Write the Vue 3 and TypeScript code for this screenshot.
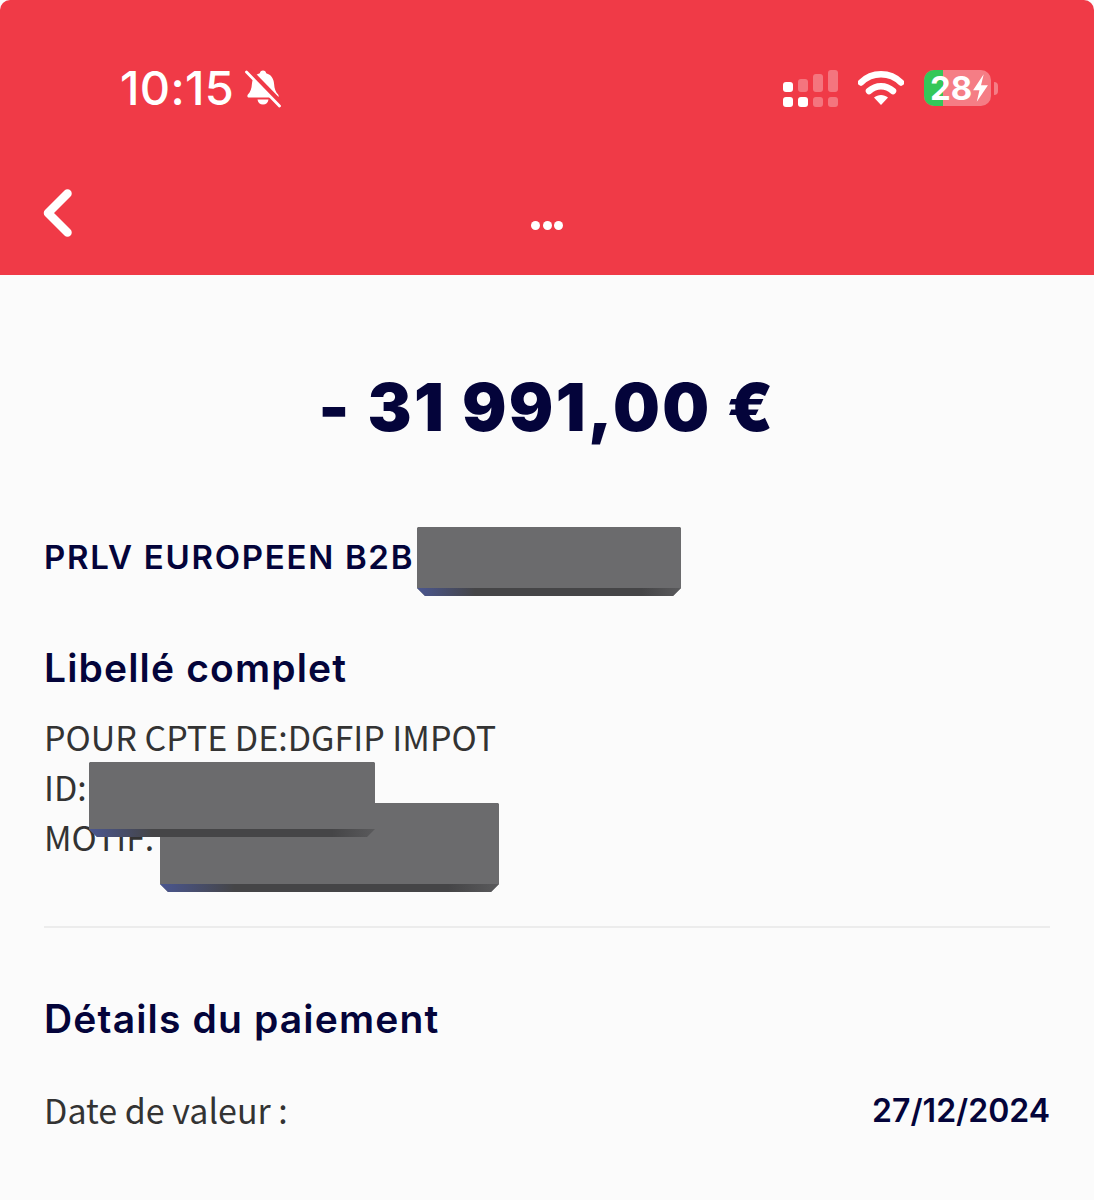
<script setup lang="ts">
const signalTop = [
  { on: true, h: 10 },
  { on: false, h: 13 },
  { on: false, h: 18 },
  { on: false, h: 22 },
];
const signalBottom = [true, true, false, false];
</script>

<template>
  <div class="page">
    <header class="top">
      <div class="status">
        <div class="status-left">
          <span class="time">10:15</span>
          <svg class="bell" width="38" height="40" viewBox="0 0 38 38">
            <path d="M19 1.500c1.800 0 3 1.200 3.200 2.800 5 1.400 7.600 5.400 7.900 10.800.3 4.800 1.400 7.800 4 10.500 1.100 1.200.4 3-1.300 3H5.200c-1.700 0-2.400-1.800-1.300-3 2.600-2.700 3.700-5.700 4-10.500.3-5.400 2.900-9.400 7.900-10.800.2-1.600 1.400-2.800 3.200-2.800z" fill="#fff" />
            <path d="M13.500 30.500h11c-.3 3-2.500 5-5.500 5s-5.200-2-5.500-5z" fill="#fff" />
            <path d="M5 1.500 36.500 34" stroke="#f03a47" stroke-width="5.500" />
            <path d="M2.500 3 35.500 37" stroke="#fff" stroke-width="2.800" stroke-linecap="round" />
          </svg>
        </div>
        <div class="status-right">
          <div class="signal">
            <div class="signal-row top-row">
              <i v-for="(bar, n) in signalTop" :key="n" :class="{ on: bar.on }" :style="{ height: bar.h + 'px' }" />
            </div>
            <div class="signal-row">
              <i v-for="(on, n) in signalBottom" :key="n" :class="{ on }" />
            </div>
          </div>
          <svg class="wifi" width="46" height="36" viewBox="0 0 46 36">
            <path d="M3 12.500C14 1.500 32 1.500 43 12.500" fill="none" stroke="#fff" stroke-width="6.500" stroke-linecap="round" />
            <path d="M11 21c7-6.500 17-6.500 24 0" fill="none" stroke="#fff" stroke-width="6.500" stroke-linecap="round" />
            <path d="M16 27.500c4-3.400 10-3.400 14 0L23 35z" fill="#fff" />
          </svg>
          <div class="battery">
            <div class="battery-body">
              <span class="battery-fill" />
              <span class="battery-num">28</span>
              <svg class="bolt" width="17" height="30" viewBox="0 0 16 28">
                <path d="M11 1 1 16h6l-2.500 11L15 11.500H8.500z" fill="#fff" />
              </svg>
            </div>
            <span class="battery-cap" />
          </div>
        </div>
      </div>
      <div class="nav">
        <svg class="back" width="32" height="50" viewBox="0 0 32 50">
          <path d="M26.500 5.500 7 25l19.500 19.500" fill="none" stroke="#fff" stroke-width="8.500" stroke-linecap="round" stroke-linejoin="round" />
        </svg>
        <div class="dots"><i /><i /><i /></div>
      </div>
    </header>

    <main class="content">
      <h1 class="amount">- 31 991,00 €</h1>

      <div class="label-row">
        <span class="label">PRLV EUROPEEN B2B</span>
        <div class="redact redact-label" />
      </div>

      <h2 class="heading">Libellé complet</h2>
      <div class="full-label">
        <p>POUR CPTE DE:DGFIP IMPOT</p>
        <p>ID:</p>
        <p class="motif">MOTIF :</p>
        <div class="redact redact-motif" />
        <div class="redact redact-id" />
      </div>

      <hr class="divider" />

      <h2 class="heading details">Détails du paiement</h2>
      <div class="detail-row">
        <span class="detail-name">Date de valeur :</span>
        <span class="detail-value">27/12/2024</span>
      </div>
    </main>
  </div>
</template>

<style scoped>
.page {
  width: 1094px;
  height: 1200px;
  background: #fbfbfb;
  overflow: hidden;
  font-family: Inter, "Liberation Sans", sans-serif;
}
.top {
  height: 275px;
  box-sizing: border-box;
  background: #f03a47;
  border-radius: 10px 10px 0 0;
  padding-top: 62px;
}
.status {
  height: 52px;
  display: flex;
  justify-content: space-between;
  align-items: center;
  padding: 0 96px 0 120px;
}
.status-left {
  display: flex;
  align-items: center;
  gap: 10px;
}
.time {
  color: #fff;
  font-size: 47px;
  font-weight: 500;
  letter-spacing: 0.3px;
  line-height: 52px;
}
.bell {
  display: block;
}
.status-right {
  display: flex;
  align-items: center;
  gap: 20px;
}
.signal {
  display: flex;
  flex-direction: column;
  gap: 5px;
}
.signal-row {
  display: flex;
  gap: 5px;
}
.signal-row.top-row {
  align-items: flex-end;
  height: 22px;
}
.signal-row i {
  width: 10px;
  height: 10px;
  border-radius: 3px;
  background: rgba(255, 255, 255, 0.3);
}
.signal-row i.on {
  background: #fff;
}
.battery {
  display: flex;
  align-items: center;
  gap: 3px;
}
.battery-body {
  position: relative;
  width: 67px;
  height: 36px;
  border-radius: 10px;
  background: rgba(255, 255, 255, 0.34);
  display: flex;
  align-items: center;
  padding-left: 6px;
  box-sizing: border-box;
}
.battery-fill {
  position: absolute;
  left: 0;
  top: 0;
  bottom: 0;
  width: 19px;
  border-radius: 10px 0 0 10px;
  background: #34c759;
}
.battery-num {
  position: relative;
  color: #fff;
  font-size: 33px;
  font-weight: 700;
  line-height: 36px;
}
.bolt {
  position: relative;
  flex: none;
}
.battery-cap {
  width: 4px;
  height: 13px;
  border-radius: 0 4px 4px 0;
  background: rgba(255, 255, 255, 0.34);
}
.nav {
  height: 161px;
  position: relative;
  display: flex;
  justify-content: center;
  padding-top: 107px;
  box-sizing: border-box;
}
.back {
  position: absolute;
  left: 41px;
  top: 74px;
}
.dots {
  display: flex;
  gap: 2.5px;
  height: 9px;
}
.dots i {
  width: 9px;
  height: 9px;
  border-radius: 50%;
  background: #fff;
}
.content {
  padding: 0 44px;
  color: #04043a;
}
.amount {
  margin: 94px 0 0;
  text-align: center;
  font-size: 66px;
  font-weight: 900;
  line-height: 76px;
  letter-spacing: 2.4px;
  color: #04043a;
}
.label-row {
  position: relative;
  margin-top: 92px;
  height: 40px;
  display: flex;
  align-items: center;
}
.label {
  font-size: 33px;
  font-weight: 600;
  letter-spacing: 1.7px;
}
.redact {
  position: absolute;
  background:
    linear-gradient(to right, #4a5690 0, #454547 22%, #454547 85%, #5a5a5c 100%) bottom / 100% 8px no-repeat,
    #6b6b6d;
  clip-path: polygon(1px 0, calc(100% - 1px) 0, 100% 1px, 100% calc(100% - 8px), calc(100% - 8px) 100%, 8px 100%, 0 calc(100% - 8px), 0 1px);
}
.redact-label {
  left: 373px;
  top: -10px;
  width: 264px;
  height: 69px;
}
.heading {
  margin: 69px 0 0;
  font-size: 39px;
  font-weight: 600;
  line-height: 44px;
  letter-spacing: 1.15px;
  color: #04043a;
}
.full-label {
  position: relative;
  margin-top: 22px;
  font-family: "Noto Sans CJK JP", "Noto Sans", sans-serif;
  font-size: 34px;
  line-height: 50px;
  color: #333;
}
.full-label p {
  margin: 0;
}
.full-label .motif {
  word-spacing: -8px;
}
.redact-id {
  left: 45px;
  top: 50px;
  width: 286px;
  height: 75px;
}
.redact-motif {
  left: 116px;
  top: 91px;
  width: 339px;
  height: 89px;
}
.divider {
  margin: 64px 0 0;
  border: 0;
  height: 2px;
  background: #ececec;
}
.heading.details {
  margin-top: 69px;
}
.detail-row {
  margin-top: 44px;
  display: flex;
  justify-content: space-between;
  align-items: center;
}
.detail-name {
  font-family: "Noto Sans CJK JP", "Noto Sans", sans-serif;
  font-size: 34px;
  line-height: 50px;
  color: #333;
}
.detail-value {
  font-size: 32px;
  font-weight: 600;
  color: #04043a;
}
</style>
